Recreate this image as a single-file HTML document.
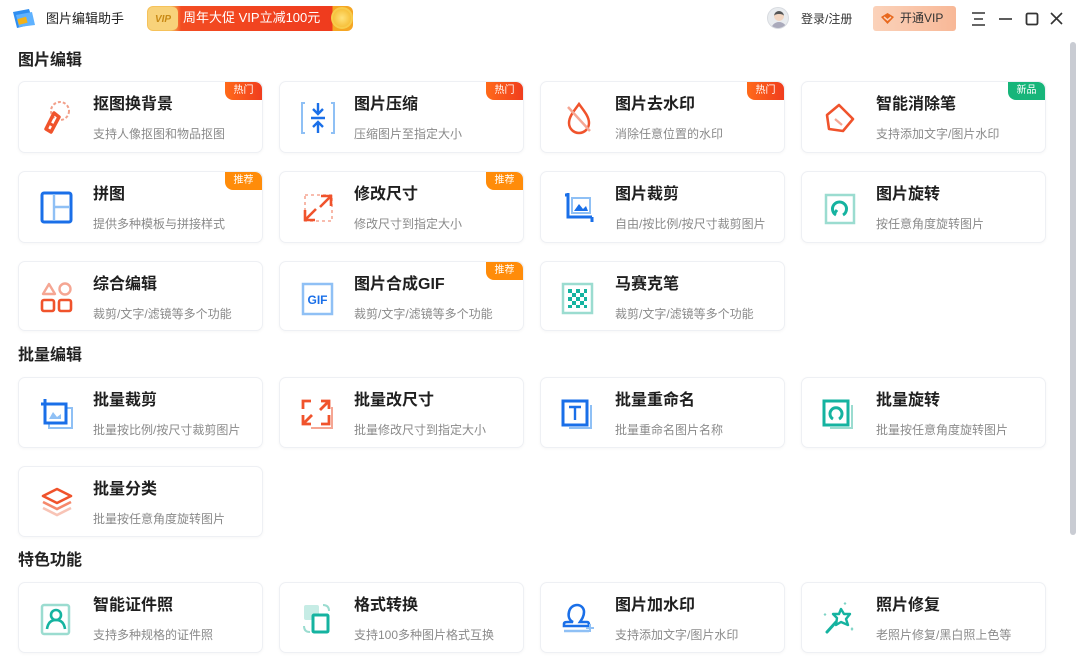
<!DOCTYPE html>
<html><head><meta charset="utf-8"><style>
*{margin:0;padding:0;box-sizing:border-box}
body{width:1079px;height:669px;overflow:hidden;background:#fff;font-family:"Liberation Sans","Noto Sans CJK SC",sans-serif;position:relative;color:#222}
.abs{position:absolute}
.sec{position:absolute;left:18px;font-size:16px;line-height:20px;font-weight:bold;color:#222}
.card{position:absolute;width:245px;height:72px;border:1px solid #eef0f4;border-radius:7px;background:#fff;box-shadow:0 1px 3px rgba(0,0,0,0.04);overflow:hidden}
.card .t{position:absolute;left:74px;top:13px;font-size:16px;line-height:20px;font-weight:bold;color:#1f1f1f}
.card .s{position:absolute;left:74px;top:44px;font-size:12px;line-height:16px;color:#8a8a8a;white-space:nowrap}
.card svg{position:absolute;left:19px;top:17px}
.b{position:absolute;right:0;top:0;width:37px;height:18px;border-radius:0 7px 0 8px;color:#fff;font-size:10px;text-align:center;line-height:18px}
.hot{background:linear-gradient(90deg,#ff6a1a,#f03d1e)}
.rec{background:#ff8c0a}
.new{background:#17b57a}
</style></head><body>
<svg class="abs" style="left:10px;top:6px" width="28" height="26" viewBox="0 0 28 26"><path d="M3 6 L19 3 L24 18 L7 22Z" fill="#2f8ef0"/><path d="M6 9 L22 6 L25 19 L9 21Z" fill="#5fb2ff"/><rect x="8" y="12" width="9" height="6" fill="#f2b21a" transform="rotate(-15 12 15)"/></svg>
<div class="abs" style="left:46px;top:10px;font-size:13px;line-height:18px;color:#222">图片编辑助手</div>
<div class="abs" style="left:147px;top:6px;width:206px;height:25px;border-radius:6px;background:linear-gradient(90deg,#f6c25a 0,#f6c25a 24px,#f34d22 34px,#ef3b1e 185px,#f5a623 186px)"></div>
<div class="abs" style="left:148px;top:7px;width:30px;height:23px;border-radius:5px;background:#f8d27a;color:#c98a16;font-size:10px;font-style:italic;font-weight:bold;line-height:25px;text-align:center">VIP</div>
<div class="abs" style="left:183px;top:9px;font-size:13px;line-height:18px;color:#fff">周年大促 VIP立减100元</div>
<div class="abs" style="left:331px;top:7px;width:22px;height:22px;border-radius:50%;background:radial-gradient(#ffe27a,#f3b323);border:2px solid #f7cc4c"></div>
<div class="abs" style="left:767px;top:7px;width:22px;height:22px;border-radius:50%;background:#e9ecef;border:1px solid #d8dbe0;overflow:hidden"><div style="position:absolute;left:6px;top:3px;width:10px;height:10px;border-radius:50%;background:#f2d6c2;border-top:3px solid #555"></div><div style="position:absolute;left:3px;top:14px;width:16px;height:10px;border-radius:8px 8px 0 0;background:#aab"></div></div>
<div class="abs" style="left:801px;top:10px;font-size:12px;line-height:18px;color:#333">登录/注册</div>
<div class="abs" style="left:873px;top:6px;width:83px;height:25px;border-radius:3px;background:linear-gradient(90deg,#fbd2ba,#f8b897);font-size:12px;color:#333;line-height:25px;padding-left:27px">开通VIP</div>
<svg class="abs" style="left:880px;top:12px" width="15" height="13" viewBox="0 0 15 13"><path d="M7.5 1 L14 5 L7.5 12 L1 5Z" fill="#e8691f"/><path d="M4 5 L7.5 8 L11 5" stroke="#fbd2ba" stroke-width="1.5" fill="none"/></svg>
<svg class="abs" style="left:970px;top:10px" width="100" height="18" viewBox="0 0 100 18"><path d="M2 3H15M4 9H13M2 15H15" stroke="#333" stroke-width="1.6"/><path d="M29 9H42" stroke="#333" stroke-width="1.6"/><rect x="56.5" y="3.5" width="11" height="11" rx="1.5" stroke="#333" stroke-width="1.8" fill="none"/><path d="M81 3L92 14M92 3L81 14" stroke="#333" stroke-width="1.6"/></svg>
<div class="abs" style="left:1070px;top:42px;width:6px;height:493px;border-radius:3px;background:#c9ccd3"></div>

<div class="sec" style="top:51px">图片编辑</div>
<div class="sec" style="top:346px">批量编辑</div>
<div class="sec" style="top:551px">特色功能</div>

<div class="card" style="left:18px;top:81px"><svg width="38" height="38" viewBox="0 0 38 38"><circle cx="22" cy="12" r="9" fill="none" stroke="#f2a08a" stroke-width="2" stroke-dasharray="3 2"/><path d="M16 14 L8 30 L13 33 L21 18Z" fill="none" stroke="#f0532c" stroke-width="3.5" stroke-linejoin="round"/><path d="M11 24 L16 27" stroke="#f0532c" stroke-width="3"/></svg><div class="t">抠图换背景</div><div class="s">支持人像抠图和物品抠图</div><div class="b hot">热门</div></div>
<div class="card" style="left:279px;top:81px"><svg width="38" height="38" viewBox="0 0 38 38"><path d="M6 4H3V34H6M32 4H35V34H32" stroke="#8fc0f5" stroke-width="2" fill="none"/><path d="M19 4V15M14 10L19 15L24 10M12 19H26M19 34V23M14 28L19 23L24 28" stroke="#1a6fe8" stroke-width="2.4" fill="none"/></svg><div class="t">图片压缩</div><div class="s">压缩图片至指定大小</div><div class="b hot">热门</div></div>
<div class="card" style="left:540px;top:81px"><svg width="38" height="38" viewBox="0 0 38 38"><path d="M19 5 C13 13 9 18 9 24 A10 10 0 0 0 29 24 C29 18 25 13 19 5Z" fill="none" stroke="#f0532c" stroke-width="2.5"/><path d="M8 8L30 32" stroke="#f5a693" stroke-width="2.5"/></svg><div class="t">图片去水印</div><div class="s">消除任意位置的水印</div><div class="b hot">热门</div></div>
<div class="card" style="left:801px;top:81px"><svg width="38" height="38" viewBox="0 0 38 38"><path d="M6 16 L18 6 L32 20 L22 32 L8 30Z" fill="none" stroke="#f0532c" stroke-width="2.6" stroke-linejoin="round"/><path d="M14 20L21 26" stroke="#f5a693" stroke-width="2.2"/></svg><div class="t">智能消除笔</div><div class="s">支持添加文字/图片水印</div><div class="b new">新品</div></div>
<div class="card" style="left:18px;top:171px"><svg width="38" height="38" viewBox="0 0 38 38"><rect x="4" y="4" width="29" height="29" rx="2" fill="none" stroke="#1a6fe8" stroke-width="3"/><path d="M16 5V32M17 18H32" stroke="#8fc0f5" stroke-width="2.4"/></svg><div class="t">拼图</div><div class="s">提供多种模板与拼接样式</div><div class="b rec">推荐</div></div>
<div class="card" style="left:279px;top:171px"><svg width="38" height="38" viewBox="0 0 38 38"><rect x="6" y="6" width="27" height="26" fill="none" stroke="#f5a693" stroke-width="1.6" stroke-dasharray="3 3"/><path d="M22 7H32V17M32 7L21 18M6 21V31H16M6 31L17 20" stroke="#f0532c" stroke-width="2.6" fill="none"/></svg><div class="t">修改尺寸</div><div class="s">修改尺寸到指定大小</div><div class="b rec">推荐</div></div>
<div class="card" style="left:540px;top:171px"><svg width="38" height="38" viewBox="0 0 38 38"><path d="M5 6H8V28H32" stroke="#1a6fe8" stroke-width="3" fill="none"/><path d="M8 6V4M32 28V33" stroke="#1a6fe8" stroke-width="3"/><rect x="12" y="9" width="18" height="15" fill="none" stroke="#8fc0f5" stroke-width="2"/><path d="M14 22L19 15L23 20L26 17L28 22Z" fill="#1a6fe8"/></svg><div class="t">图片裁剪</div><div class="s">自由/按比例/按尺寸裁剪图片</div></div>
<div class="card" style="left:801px;top:171px"><svg width="38" height="38" viewBox="0 0 38 38"><rect x="5" y="6" width="28" height="28" fill="none" stroke="#9bdcd0" stroke-width="2.5"/><path d="M15 26 A7 7 0 1 1 22 26" fill="none" stroke="#15b3a0" stroke-width="3"/><path d="M13 25L16 21" stroke="#15b3a0" stroke-width="3"/></svg><div class="t">图片旋转</div><div class="s">按任意角度旋转图片</div></div>
<div class="card" style="left:18px;top:261px;height:70px"><svg width="38" height="38" viewBox="0 0 38 38"><path d="M11 5L17 15H5Z" fill="none" stroke="#f5a693" stroke-width="2.4" stroke-linejoin="round"/><circle cx="27" cy="10" r="5.5" fill="none" stroke="#f5a693" stroke-width="2.4"/><rect x="4" y="21" width="12" height="11" rx="2" fill="none" stroke="#f0532c" stroke-width="2.6"/><rect x="21" y="21" width="12" height="11" rx="2" fill="none" stroke="#f0532c" stroke-width="2.6"/></svg><div class="t">综合编辑</div><div class="s">裁剪/文字/滤镜等多个功能</div></div>
<div class="card" style="left:279px;top:261px;height:70px"><svg width="38" height="38" viewBox="0 0 38 38"><rect x="4" y="5" width="29" height="30" fill="#fff" stroke="#8fc0f5" stroke-width="2.5"/><text x="18.5" y="25" text-anchor="middle" font-family="Liberation Sans" font-size="12" font-weight="bold" fill="#1a6fe8">GIF</text></svg><div class="t">图片合成GIF</div><div class="s">裁剪/文字/滤镜等多个功能</div><div class="b rec">推荐</div></div>
<div class="card" style="left:540px;top:261px;height:70px"><svg width="38" height="38" viewBox="0 0 38 38"><rect x="3" y="5" width="29" height="29" fill="none" stroke="#9bdcd0" stroke-width="2.5"/><path d="M8 10h4v4h-4zM16 10h4v4h-4zM24 10h3v4h-3zM12 14h4v4h-4zM20 14h4v4h-4zM8 18h4v4h-4zM16 18h4v4h-4zM24 18h3v4h-3zM12 22h4v4h-4zM20 22h4v4h-4zM8 26h4v3h-4zM16 26h4v3h-4zM24 26h3v3h-3z" fill="#15b3a0"/></svg><div class="t">马赛克笔</div><div class="s">裁剪/文字/滤镜等多个功能</div></div>
<div class="card" style="left:18px;top:377px;height:71px"><svg width="38" height="38" viewBox="0 0 38 38"><rect x="8" y="10" width="23" height="20" fill="none" stroke="#8fc0f5" stroke-width="2" transform="translate(3 3)"/><rect x="7" y="9" width="21" height="19" fill="#fff" stroke="#1a6fe8" stroke-width="3"/><path d="M7 9V4M7 9H3" stroke="#1a6fe8" stroke-width="3"/><path d="M11 24L15 17L19 22L23 19V24Z" fill="#8fc0f5"/></svg><div class="t">批量裁剪</div><div class="s">批量按比例/按尺寸裁剪图片</div></div>
<div class="card" style="left:279px;top:377px;height:71px"><svg width="38" height="38" viewBox="0 0 38 38"><path d="M33 12V33H12" stroke="#f5a693" stroke-width="2" fill="none"/><path d="M4 14V6H12M22 6H30V14M30 20V29H22M12 29H4V20M29 7L21 15M5 28L13 20" stroke="#f0532c" stroke-width="2.8" fill="none"/></svg><div class="t">批量改尺寸</div><div class="s">批量修改尺寸到指定大小</div></div>
<div class="card" style="left:540px;top:377px;height:71px"><svg width="38" height="38" viewBox="0 0 38 38"><path d="M31 10V33H9" stroke="#8fc0f5" stroke-width="2" fill="none"/><rect x="3" y="6" width="24" height="24" fill="#fff" stroke="#1a6fe8" stroke-width="3"/><path d="M9 12H21M15 12V25" stroke="#1a6fe8" stroke-width="2.4"/></svg><div class="t">批量重命名</div><div class="s">批量重命名图片名称</div></div>
<div class="card" style="left:801px;top:377px;height:71px"><svg width="38" height="38" viewBox="0 0 38 38"><path d="M31 10V33H9" stroke="#9bdcd0" stroke-width="2" fill="none"/><rect x="3" y="6" width="24" height="24" fill="#fff" stroke="#15b3a0" stroke-width="3"/><path d="M12 24 A6 6 0 1 1 18 24" fill="none" stroke="#15b3a0" stroke-width="3"/></svg><div class="t">批量旋转</div><div class="s">批量按任意角度旋转图片</div></div>
<div class="card" style="left:18px;top:466px;height:71px"><svg width="38" height="38" viewBox="0 0 38 38"><path d="M5 24L19 31L33 24" stroke="#f8c4b6" stroke-width="2.6" fill="none"/><path d="M5 18L19 25L33 18" stroke="#f5896c" stroke-width="2.6" fill="none"/><path d="M19 5L33 12L19 19L5 12Z" stroke="#f0532c" stroke-width="2.6" fill="none" stroke-linejoin="round"/></svg><div class="t">批量分类</div><div class="s">批量按任意角度旋转图片</div></div>
<div class="card" style="left:18px;top:582px;height:71px"><svg width="38" height="38" viewBox="0 0 38 38"><rect x="4" y="5" width="27" height="29" rx="2" fill="none" stroke="#9bdcd0" stroke-width="2.5"/><circle cx="18" cy="15" r="5" fill="none" stroke="#15b3a0" stroke-width="2.6"/><path d="M9 29C10 22 14 20 18 20C22 20 26 22 27 29" fill="none" stroke="#15b3a0" stroke-width="2.6"/></svg><div class="t">智能证件照</div><div class="s">支持多种规格的证件照</div></div>
<div class="card" style="left:279px;top:582px;height:71px"><svg width="38" height="38" viewBox="0 0 38 38"><rect x="5" y="5" width="15" height="15" rx="2" fill="#c6ece5"/><path d="M24 5C28 5 30 7 30 11M5 26C5 30 7 32 11 32" stroke="#9bdcd0" stroke-width="2" fill="none"/><rect x="14" y="15" width="15" height="17" rx="1" fill="#fff" stroke="#15b3a0" stroke-width="3"/></svg><div class="t">格式转换</div><div class="s">支持100多种图片格式互换</div></div>
<div class="card" style="left:540px;top:582px;height:71px"><svg width="38" height="38" viewBox="0 0 38 38"><path d="M13 22C9 20 8 16 9 12C10 7 14 5 17 5C21 5 24 8 24 12C24 16 22 19 20 22H27C29 22 29 24 29 26H4V24C4 22 6 22 8 22Z" fill="none" stroke="#1a6fe8" stroke-width="2.6"/><path d="M4 31H29" stroke="#8fc0f5" stroke-width="2.6"/><path d="M30 24V32M26 28H34" stroke="#8fc0f5" stroke-width="2"/></svg><div class="t">图片加水印</div><div class="s">支持添加文字/图片水印</div></div>
<div class="card" style="left:801px;top:582px;height:71px"><svg width="38" height="38" viewBox="0 0 38 38"><path d="M20 9L23 14L29 14L25 19L27 25L20 22L15 25L16 18L12 14L18 14Z" fill="none" stroke="#15b3a0" stroke-width="2.4" stroke-linejoin="round"/><path d="M15 22L6 32" stroke="#15b3a0" stroke-width="3" stroke-linecap="round"/><path d="M4 13l1.5 1.5L4 16l-1.5-1.5zM24 2l1.5 1.5L24 5l-1.5-1.5zM31 27l1.5 2L31 31l-1.5-2z" fill="#7fd4c6"/></svg><div class="t">照片修复</div><div class="s">老照片修复/黑白照上色等</div></div>
</body></html>
